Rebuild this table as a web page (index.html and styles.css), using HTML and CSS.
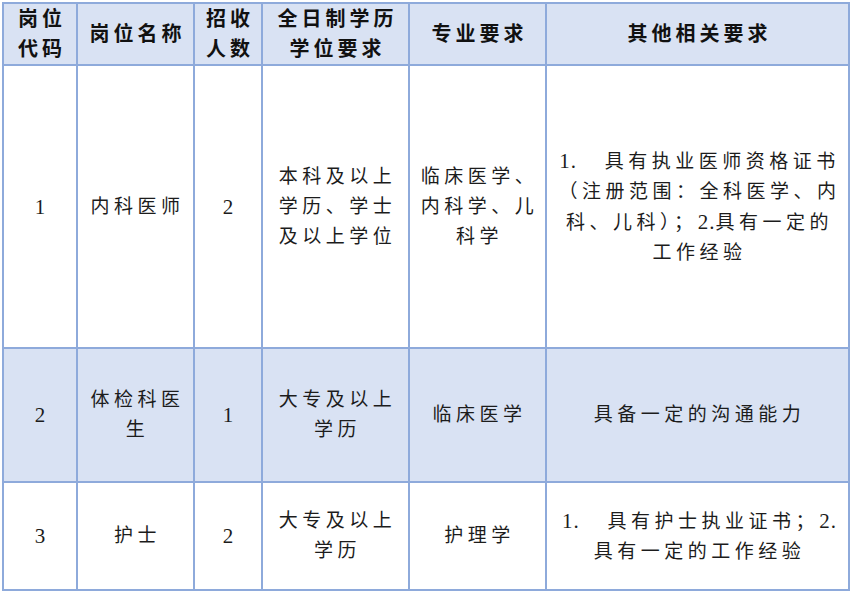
FILE: index.html
```html
<!DOCTYPE html>
<html lang="zh-CN">
<head>
<meta charset="utf-8">
<title>岗位表</title>
<link rel="stylesheet" href="styles.css">
</head>
<body>
<div class="page">
<table class="jobs">
  <colgroup>
    <col class="c1"><col class="c2"><col class="c3"><col class="c4"><col class="c5"><col class="c6">
  </colgroup>
  <thead>
    <tr class="head">
      <th>岗位<br>代码</th>
      <th>岗位名称</th>
      <th>招收<br>人数</th>
      <th>全日制学历<br>学位要求</th>
      <th>专业要求</th>
      <th>其他相关要求</th>
    </tr>
  </thead>
  <tbody>
    <tr class="r1">
      <td class="num">1</td>
      <td>内科医师</td>
      <td class="num">2</td>
      <td>本科及以上<br>学历、学士<br>及以上学位</td>
      <td>临床医学、<br>内科学、儿<br>科学</td>
      <td><span class="lat">1.</span>&nbsp;&nbsp;&nbsp;具有执业医师资格证书<br>（注册范围：全科医学、内<br>科、儿科）；<span class="lat">2.</span>具有一定的<br>工作经验</td>
    </tr>
    <tr class="r2 shade">
      <td class="num">2</td>
      <td>体检科医<br>生</td>
      <td class="num">1</td>
      <td>大专及以上<br>学历</td>
      <td>临床医学</td>
      <td>具备一定的沟通能力</td>
    </tr>
    <tr class="r3">
      <td class="num">3</td>
      <td>护士</td>
      <td class="num">2</td>
      <td>大专及以上<br>学历</td>
      <td>护理学</td>
      <td><span class="lat">1.</span>&nbsp;&nbsp;&nbsp;具有护士执业证书；<span class="lat">2.</span><br>具有一定的工作经验</td>
    </tr>
  </tbody>
</table>
</div>
</body>
</html>
```

FILE: styles.css
```css
html, body {
  margin: 0;
  padding: 0;
  background: #ffffff;
}

.page {
  padding: 2px 0 0 2px;
}

.jobs {
  border-collapse: collapse;
  table-layout: fixed;
  width: 848px;
  font-family: "Liberation Serif", "Noto Sans CJK SC", serif;
  color: #1c1c1c;
}

.c1 { width: 74px; }
.c2 { width: 117px; }
.c3 { width: 68px; }
.c4 { width: 147px; }
.c5 { width: 137px; }
.c6 { width: 303px; }

.jobs th,
.jobs td {
  border: 2px solid #8eaadb;
  text-align: center;
  vertical-align: middle;
  padding: 0 4px 0 8px;
  font-size: 19px;
  line-height: 30px;
  letter-spacing: 4.5px;
  white-space: nowrap;
  overflow: hidden;
}

.jobs th {
  font-weight: 700;
  font-size: 20px;
  letter-spacing: 4px;
  line-height: 30px;
  background: #d9e2f3;
  color: #111111;
}

.head { height: 60px; }
.r1 { height: 283px; }
.r2 { height: 134px; }
.r3 { height: 108px; }

.shade td {
  background: #d9e2f3;
}

.jobs td.num {
  font-size: 21px;
  letter-spacing: 0;
  padding: 0;
}

.lat {
  font-size: 21px;
  letter-spacing: 1px;
}
```
